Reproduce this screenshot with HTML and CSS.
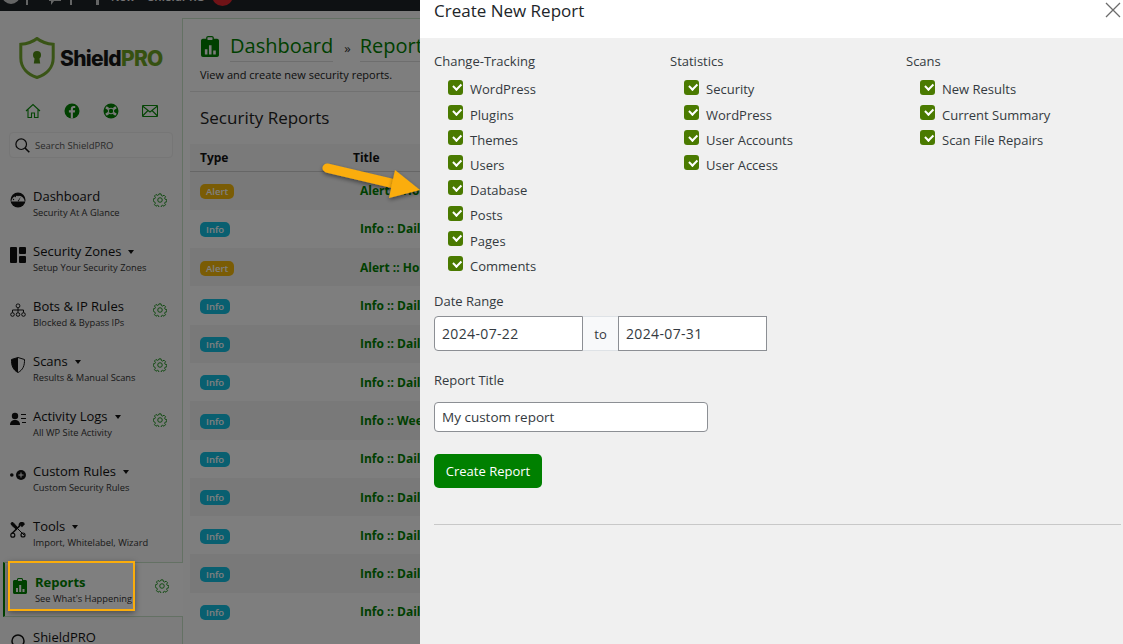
FILE: index.html
```html
<!DOCTYPE html>
<html lang="en">
<head>
<meta charset="utf-8">
<title>ShieldPRO Reports</title>
<link rel="stylesheet" href="styles.css">
</head>
<body>
<div class="screen">
  <div class="adminbar">
    <div class="adminbar-inner">
      <svg class="wp-ico" width="20" height="20" viewBox="0 0 20 20"><circle cx="10" cy="10" r="9" fill="#c8cacb"/></svg>
      <span class="ab-tick"></span>
      <svg class="ab-a" width="14" height="14" viewBox="0 0 14 14"><path d="M1 0h12v10H6l-3 4v-4H1z" fill="#c8cacb"/></svg>
      <span class="ab-tick ab-tick-2"></span>
      <span class="ab-plus"></span>
      <span class="ab-text">New</span>
      <span class="ab-text ab-shield">ShieldPRO</span>
      <span class="ab-badge">10</span>
    </div>
  </div>
  <div class="layout">
    <aside class="sidebar">
      <div class="logo">
        <svg width="36" height="42" viewBox="0 0 36 42"><path d="M18 1.500C13 5.500 7.500 7 1.800 7.300V21C1.800 31 9 37.500 18 40.500 27 37.500 34.200 31 34.200 21V7.300C28.500 7 23 5.500 18 1.500Z" fill="none" stroke="#73a82c" stroke-width="3"/><circle cx="18" cy="18" r="4" fill="#4e8a12"/><path d="M15.800 20h4.400l1 6.500h-6.400z" fill="#4e8a12"/></svg>
        <span class="logo-text">Shield<b>PRO</b></span>
      </div>
      <div class="quick-icons">
        <svg width="16" height="16" viewBox="0 0 16 16" fill="none" stroke="#0a8a0a" stroke-width="1.100"><path d="M1 8 8 1.500 15 8M3 6.500V14.500H6.500V10H9.500V14.500H13V6.500"/></svg>
        <svg width="16" height="16" viewBox="0 0 16 16"><circle cx="8" cy="8" r="7.500" fill="#008000"/><path d="M8.900 15.500V9.500H10.800L11.100 7.300H8.900V6C8.900 5.300 9.200 4.900 10 4.900H11.200V3C10.800 2.900 10.200 2.900 9.700 2.900 7.900 2.900 6.800 3.900 6.800 5.800V7.300H4.900V9.500H6.800V15.500Z" fill="#f8f8f8"/></svg>
        <svg width="16" height="16" viewBox="0 0 16 16"><circle cx="8" cy="8" r="7.500" fill="#008000"/><circle cx="8" cy="8" r="3.200" fill="#f8f8f8"/><circle cx="8" cy="8" r="2.200" fill="#008000"/><path d="M3 4.200 5.500 6M13 4.200 10.500 6M3 11.800 5.500 10M13 11.800 10.500 10" stroke="#f8f8f8" stroke-width="2.600"/></svg>
        <svg width="16" height="12" viewBox="0 0 16 12" fill="none" stroke="#0a8a0a" stroke-width="1.100"><rect x=".5" y=".5" width="15" height="11" rx="1"/><path d="M.5 1 8 7 15.500 1M.5 11 6 5.500M15.500 11 10 5.500"/></svg>
      </div>
      <div class="search">
        <svg width="15" height="15" viewBox="0 0 15 15" fill="none" stroke="#111" stroke-width="1.200"><circle cx="6.200" cy="6.200" r="5.300"/><path d="M10 10 14.300 14.300" stroke-width="1.600"/></svg>
        <span>Search ShieldPRO</span>
      </div>
      <nav class="menu">
        <div class="item">
          <svg class="ico" width="16" height="16" viewBox="0 0 16 16"><circle cx="8" cy="8" r="7.500" fill="#111"/><path d="M1.200 9.500A6.900 6.900 0 0 1 14.800 9.500Z" fill="#f8f8f8"/><path d="M7.700 9 11 4.500 8.600 9.500Z" fill="#111"/><circle cx="3.500" cy="7.500" r=".7" fill="#111"/><circle cx="5.300" cy="4.500" r=".7" fill="#111"/><circle cx="8" cy="3.500" r=".7" fill="#111"/></svg>
          <div class="item-text"><div class="item-title">Dashboard</div><div class="item-sub">Security At A Glance</div></div>
          <svg class="gear"><use href="#gear"/></svg>
        </div>
        <div class="item">
          <svg class="ico" width="16" height="16" viewBox="0 0 16 16" fill="#111"><rect width="7" height="16" rx="1"/><rect x="9" width="7" height="7" rx="1"/><rect x="9" y="9" width="7" height="7" rx="1"/></svg>
          <div class="item-text"><div class="item-title">Security Zones<i class="caret"></i></div><div class="item-sub">Setup Your Security Zones</div></div>
        </div>
        <div class="item">
          <svg class="ico" width="16" height="16" viewBox="0 0 16 16" fill="none" stroke="#111" stroke-width="1"><rect x="6.200" y="2" width="3.600" height="3.600" rx="1.500"/><path d="M8 5.600V8M2.500 10.500V8H13.500V10.500M8 8V10.500"/><circle cx="2.500" cy="12.500" r="1.800"/><circle cx="8" cy="12.500" r="1.800"/><circle cx="13.500" cy="12.500" r="1.800"/></svg>
          <div class="item-text"><div class="item-title">Bots &amp; IP Rules</div><div class="item-sub">Blocked &amp; Bypass IPs</div></div>
          <svg class="gear"><use href="#gear"/></svg>
        </div>
        <div class="item">
          <svg class="ico" width="16" height="16" viewBox="0 0 16 16"><path d="M8 .5 1.500 2.500C1.300 8.500 3 13 8 15.500 13 13 14.700 8.500 14.500 2.500Z" fill="#f8f8f8" stroke="#111" stroke-width="1"/><path d="M8 .5 1.500 2.500C1.300 8.500 3 13 8 15.500Z" fill="#111"/></svg>
          <div class="item-text"><div class="item-title">Scans<i class="caret"></i></div><div class="item-sub">Results &amp; Manual Scans</div></div>
          <svg class="gear"><use href="#gear"/></svg>
        </div>
        <div class="item">
          <svg class="ico" width="16" height="14" viewBox="0 0 16 14" fill="#111"><circle cx="5" cy="4" r="3.200"/><path d="M0 13C0 9.500 2 8 5 8s5 1.500 5 5Z"/><path d="M11 2h5v1h-5zM11 6h5v1h-5zM12 10h4v1h-4z"/></svg>
          <div class="item-text"><div class="item-title">Activity Logs<i class="caret"></i></div><div class="item-sub">All WP Site Activity</div></div>
          <svg class="gear"><use href="#gear"/></svg>
        </div>
        <div class="item">
          <svg class="ico ico-wide" width="16" height="10" viewBox="0 0 16 10" fill="#111"><circle cx="1.800" cy="5" r="1.800"/><circle cx="11" cy="5" r="5"/><path d="M10.500 2.500h1v2h2v1h-2v2h-1v-2h-2v-1h2z" fill="#f8f8f8"/></svg>
          <div class="item-text"><div class="item-title">Custom Rules<i class="caret"></i></div><div class="item-sub">Custom Security Rules</div></div>
        </div>
        <div class="item">
          <svg class="ico" width="16" height="16" viewBox="0 0 16 16" fill="none" stroke="#111"><path d="M2 1 14 13" stroke-width="1"/><path d="M1 1 3 .500 8 6 6.500 7.500 1.500 3Z" fill="#111"/><path d="M14.500 1.500 12 4 11 3 13 1C10.500 0 9 2 9.500 4L2 11.500" stroke-width="1.600"/><circle cx="2.800" cy="13.200" r="2" stroke-width="1.200"/><circle cx="13" cy="13" r="2" stroke-width="1.200"/></svg>
          <div class="item-text"><div class="item-title">Tools<i class="caret"></i></div><div class="item-sub">Import, Whitelabel, Wizard</div></div>
        </div>
        <div class="item item-active">
          <svg class="ico" width="14" height="16" viewBox="0 0 14 16"><use href="#clip"/></svg>
          <div class="item-text"><div class="item-title">Reports</div><div class="item-sub">See What's Happening</div></div>
          <svg class="gear"><use href="#gear"/></svg>
        </div>
        <div class="item">
          <svg class="ico" width="16" height="16" viewBox="0 0 16 16" fill="none" stroke="#111" stroke-width="1.500"><circle cx="8" cy="8" r="6"/></svg>
          <div class="item-text"><div class="item-title">ShieldPRO</div></div>
        </div>
      </nav>
    </aside>
    <main class="content">
      <header class="crumbs">
        <svg class="crumb-ico" width="18" height="21" viewBox="0 0 14 16" preserveAspectRatio="none"><use href="#clip"/></svg>
        <span class="crumb">Dashboard</span><span class="sep">»</span><span class="crumb">Reports</span>
      </header>
      <p class="lead">View and create new security reports.</p>
      <h2 class="section-title">Security Reports</h2>
      <table class="reports">
        <thead><tr><th class="col-type">Type</th><th>Title</th></tr></thead>
        <tbody>
          <tr><td><span class="tag tag-alert">Alert</span></td><td class="rtitle">Alert :: Hourly</td></tr>
          <tr><td><span class="tag tag-info">Info</span></td><td class="rtitle">Info :: Daily</td></tr>
          <tr><td><span class="tag tag-alert">Alert</span></td><td class="rtitle">Alert :: Hourly</td></tr>
          <tr><td><span class="tag tag-info">Info</span></td><td class="rtitle">Info :: Daily</td></tr>
          <tr><td><span class="tag tag-info">Info</span></td><td class="rtitle">Info :: Daily</td></tr>
          <tr><td><span class="tag tag-info">Info</span></td><td class="rtitle">Info :: Daily</td></tr>
          <tr><td><span class="tag tag-info">Info</span></td><td class="rtitle">Info :: Weekly</td></tr>
          <tr><td><span class="tag tag-info">Info</span></td><td class="rtitle">Info :: Daily</td></tr>
          <tr><td><span class="tag tag-info">Info</span></td><td class="rtitle">Info :: Daily</td></tr>
          <tr><td><span class="tag tag-info">Info</span></td><td class="rtitle">Info :: Daily</td></tr>
          <tr><td><span class="tag tag-info">Info</span></td><td class="rtitle">Info :: Daily</td></tr>
          <tr><td><span class="tag tag-info">Info</span></td><td class="rtitle">Info :: Daily</td></tr>
        </tbody>
      </table>
    </main>
  </div>
  <div class="dim"></div>

  <div class="callout"></div>
  <svg class="arrow" width="105" height="50" viewBox="0 0 105 50">
    <defs><filter id="as" x="-20%" y="-30%" width="140%" height="170%"><feDropShadow dx="0" dy="2" stdDeviation="2" flood-color="#000" flood-opacity=".45"/></filter></defs>
    <path d="M10 12 78 28" stroke="#fbad0b" stroke-width="9" stroke-linecap="round" fill="none" filter="url(#as)"/>
    <path d="M78 14 103 34 72 42Z" fill="#fbad0b" filter="url(#as)"/>
  </svg>

  <section class="panel">
    <header class="panel-head">
      <h3 class="panel-title">Create New Report</h3>
      <svg class="close" width="16" height="16" viewBox="0 0 16 16" stroke="#6b6b6b" stroke-width="1.300"><path d="M1 1 15 15M15 1 1 15"/></svg>
    </header>
    <form class="panel-body">
      <div class="groups">
        <div class="group">
          <div class="group-title">Change-Tracking</div>
          <label class="check"><i class="box"></i>WordPress</label>
          <label class="check"><i class="box"></i>Plugins</label>
          <label class="check"><i class="box"></i>Themes</label>
          <label class="check"><i class="box"></i>Users</label>
          <label class="check"><i class="box"></i>Database</label>
          <label class="check"><i class="box"></i>Posts</label>
          <label class="check"><i class="box"></i>Pages</label>
          <label class="check"><i class="box"></i>Comments</label>
        </div>
        <div class="group">
          <div class="group-title">Statistics</div>
          <label class="check"><i class="box"></i>Security</label>
          <label class="check"><i class="box"></i>WordPress</label>
          <label class="check"><i class="box"></i>User Accounts</label>
          <label class="check"><i class="box"></i>User Access</label>
        </div>
        <div class="group">
          <div class="group-title">Scans</div>
          <label class="check"><i class="box"></i>New Results</label>
          <label class="check"><i class="box"></i>Current Summary</label>
          <label class="check"><i class="box"></i>Scan File Repairs</label>
        </div>
      </div>
      <div class="field-label">Date Range</div>
      <div class="range">
        <input class="date date-first" type="text" value="2024-07-22">
        <span class="to">to</span>
        <input class="date" type="text" value="2024-07-31">
      </div>
      <div class="field-label title-label">Report Title</div>
      <input class="title-input" type="text" value="My custom report">
      <button class="submit" type="button">Create Report</button>
      <hr class="rule">
    </form>
  </section>
</div>
<svg class="defs" width="0" height="0">
  <symbol id="gear" viewBox="0 0 16 16"><g fill="none" stroke="#0a8a0a" stroke-width="1"><path d="M6.800 1h2.400l.4 1.900 1.300.6 1.700-1 1.700 1.700-1 1.700.6 1.300 1.900.4v2.400l-1.900.4-.6 1.300 1 1.700-1.700 1.700-1.700-1-1.300.6-.4 1.900H6.800l-.4-1.900-1.300-.6-1.700 1-1.700-1.700 1-1.700-.6-1.300L.2 9.200V6.800l1.900-.4.6-1.300-1-1.700 1.700-1.700 1.700 1 1.300-.6z"/><circle cx="8" cy="8" r="2.600"/></g></symbol>
  <symbol id="clip" viewBox="0 0 14 16" preserveAspectRatio="none"><path d="M1.500 2H4V1.500C4 .7 4.700 0 5.500 0h3C9.300 0 10 .7 10 1.500V2h2.500c.8 0 1.500.7 1.500 1.500V14.500c0 .8-.7 1.500-1.500 1.500h-11C.7 16 0 15.300 0 14.500V3.500C0 2.700.7 2 1.500 2Z" fill="#008000"/><rect x="5" y="1" width="4" height="2" rx=".5" fill="#f8f8f8"/><path d="M3 10h2v4H3zM6.200 7h2v7h-2zM9.500 11h2v3h-2z" fill="#f8f8f8"/></symbol>
</svg>
</body>
</html>
```
FILE: styles.css
```css
* { box-sizing: border-box; }
html, body { margin: 0; height: 100%; }
body { font-family: "Open Sans", "Noto Sans", "Liberation Sans", sans-serif; overflow: hidden; background: #fff; color: #212529; }
.defs { display: block; }
.screen { position: relative; width: 1123px; height: 644px; overflow: hidden; background: #f8f8f8; }

.adminbar { height: 11px; background: #1d2327; overflow: hidden; }
.adminbar-inner { display: flex; align-items: flex-end; height: 16px; margin-top: -11px; color: #e8e8e8; font-size: 13px; line-height: 16px; }
.wp-ico { margin-left: 1px; flex: none; }
.ab-tick { width: 2px; height: 6px; background: #c8cacb; margin-left: 5px; flex: none; }
.ab-a { margin-left: 20px; flex: none; }
.ab-tick-2 { margin-left: 8px; }
.ab-plus { width: 3px; height: 8px; background: #c8cacb; margin-left: 24px; flex: none; }
.ab-text { margin-left: 12px; width: 37px; font-size: 11px; font-weight: 600; flex: none; }
.ab-shield { margin-left: 0; width: 64px; font-size: 11.500px; }
.ab-badge { width: 21px; height: 21px; margin-bottom: -1px; border-radius: 50%; background: #e0262f; font-size: 12px; text-align: center; flex: none; }

.layout { display: flex; height: 633px; }
.sidebar { width: 182px; flex: none; padding: 26px 0 0; }
.logo { display: flex; align-items: center; gap: 5px; padding-left: 19px; height: 42px; }
.logo-text { font-family: "Inter", sans-serif; font-size: 21px; font-weight: 800; letter-spacing: -.7px; color: #161616; }
.logo-text b { color: #6da322; font-weight: 800; }
.quick-icons { display: flex; align-items: center; gap: 23px; padding-left: 25px; margin-top: 22px; height: 20px; }
.search { display: flex; align-items: center; gap: 5px; width: 164px; height: 26px; margin: 11px 0 0 9px; padding-left: 5px; border: 1px solid #ececec; border-radius: 4px; background: #fafafa; color: #555; font-size: 9.500px; }
.menu { margin-top: 29px; }
.item { display: flex; align-items: flex-start; height: 55px; padding-left: 10px; position: relative; }
.ico { margin-top: 5px; flex: none; }
.ico-wide { margin-top: 8px; }
.item-text { margin-left: 7px; width: 117px; flex: none; white-space: nowrap; }
.item-title { font-size: 13px; line-height: 18px; color: #111; }
.item-sub { font-size: 9.300px; line-height: 13px; color: #333; margin-top: 1px; }
.caret { display: inline-block; margin: 0 0 2px 7px; border: 3px solid transparent; border-top: 4px solid #111; border-bottom: 0; vertical-align: middle; }
.gear { width: 14px; height: 14px; margin: 6px 0 0 3px; flex: none; }
.item-active { z-index: 1; background: #fff; width: 180px; height: 55px; margin: -10px 0 11px 3px; padding: 10px 0 0 8px; border-left: 2px solid #008000; border-top: 1px solid #c9e2c9; border-bottom: 1px solid #c9e2c9; }
.item-active .item-text { margin-left: 8px; }
.item-active .item-title { font-weight: 700; color: #008000; }

.content { flex: 1; margin-top: 7px; border-left: 1px solid #c9e2c9; border-top: 1px solid #c9e2c9; padding: 11px 7px 0; background: #fcfcfc; min-width: 0; }
.crumbs { display: flex; align-items: center; gap: 11px; padding-left: 11px; height: 32px; }
.crumb-ico { flex: none; }
.crumb { font-size: 20px; color: #008000; border-bottom: 1px solid #ddd; line-height: 30px; }
.sep { font-size: 13px; color: #333; margin: 4px -2px 0 0; }
.lead { margin: 5px 0 0; padding: 0 0 9px 10px; font-size: 11px; line-height: 15px; color: #222; border-bottom: 1px solid #e2e2e2; }
.section-title { margin: 14px 0 0 10px; font-size: 17px; font-weight: 400; line-height: 24px; color: #222; }
.reports { margin-top: 13.500px; width: 600px; border-collapse: collapse; table-layout: fixed; font-size: 12px; }
.reports th { height: 28px; text-align: left; font-weight: 700; padding: 0 0 0 10px; color: #111; border-bottom: 1px solid #ccc; }
.col-type { width: 153px; }
.reports td { height: 38.300px; padding: 0 0 0 10px; }
.reports thead tr { background: #f4f4f4; }
.reports tbody tr:nth-child(odd) { background: #f2f2f2; }
.rtitle { font-weight: 700; color: #008000; padding-left: 17px !important; }
.tag { display: inline-block; padding: 0 6px; border-radius: 5px; font-size: 9.500px; line-height: 15px; font-weight: 600; color: #fff; vertical-align: middle; margin-top: -1px; }
.tag-alert { background: #f5b90a; }
.tag-info { background: #12bfe0; }

.dim { position: absolute; inset: 0; z-index: 2; background: rgba(0, 0, 0, .5); }
.callout { position: absolute; z-index: 3; left: 8px; top: 561px; width: 127px; height: 50px; border: 2px solid #fbad0b; box-shadow: 0 2px 6px rgba(0, 0, 0, .4); }
.arrow { position: absolute; z-index: 3; left: 317px; top: 156px; }

.panel { position: absolute; z-index: 3; left: 420px; top: 0; right: 0; bottom: 0; background: #f0f0f0; display: flex; flex-direction: column; color: #343a40; font-size: 13px; }
.panel-head { position: relative; height: 38px; background: #fff; padding-left: 14px; flex: none; }
.panel-title { margin: 0; font-size: 17px; font-weight: 400; line-height: 22px; color: #212529; }
.close { position: absolute; right: 2px; top: 2px; }
.panel-body { padding: 14px 2px 0 14px; }
.groups { display: flex; height: 240px; }
.group { width: 236px; flex: none; }
.group-title { line-height: 18px; margin-bottom: 6.900px; }
.check { display: flex; align-items: center; height: 25.200px; padding-left: 14px; }
.box { position: relative; width: 15px; height: 15px; margin: -4.500px 7px 0 0; border-radius: 3px; background: #4a7a00; flex: none; }
.box::after { content: ""; position: absolute; left: 4.500px; top: 3.500px; width: 6px; height: 3.500px; border-left: 2px solid #fff; border-bottom: 2px solid #fff; transform: rotate(-45deg); }
.field-label { line-height: 18px; }
.range { display: flex; margin-top: 6px; height: 35px; }
.date, .title-input { font: inherit; color: #343a40; border: 1px solid #8c8f94; background: #fff; padding: 0 7px; outline: 0; }
.title-input { font-size: 13.500px; }
.date { width: 149px; height: 35px; border-radius: 0; font-size: 14px; letter-spacing: .35px; }
.date-first { border-radius: 4px 0 0 4px; }
.to { width: 35px; display: flex; align-items: center; justify-content: center; background: #f8f9fa; border-top: 1px solid #dee2e6; border-bottom: 1px solid #dee2e6; }
.title-label { margin-top: 20px; }
.title-input { display: block; width: 274px; height: 30px; margin-top: 13px; border-radius: 4px; }
.submit { display: block; width: 108px; height: 34px; margin-top: 22px; padding: 0; font: inherit; color: #fff; background: #008000; border: 0; border-radius: 5px; }
.rule { margin: 36px 0 0; border: 0; border-top: 1px solid #c8c8c8; }
```
